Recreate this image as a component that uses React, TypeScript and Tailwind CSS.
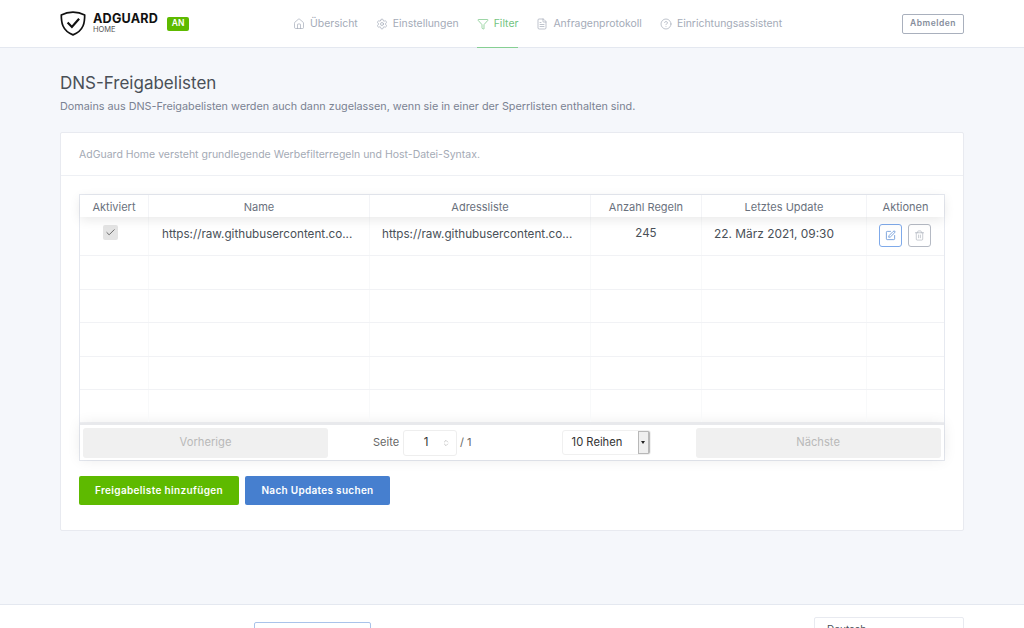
import { CircleHelp, FileText, Filter, House, Settings, SquarePen, Trash2, Check, ChevronsUpDown } from "lucide-react"

const navItems = [
  { label: "Übersicht", icon: House },
  { label: "Einstellungen", icon: Settings },
  { label: "Filter", icon: Filter, active: true },
  { label: "Anfragenprotokoll", icon: FileText },
  { label: "Einrichtungsassistent", icon: CircleHelp },
]

const columns = ["Aktiviert", "Name", "Adressliste", "Anzahl Regeln", "Letztes Update", "Aktionen"]
const gridCols = "grid grid-cols-[69px_221px_221px_111px_165px_1fr]"
const url = "https://raw.githubusercontent.co..."
const emptyRows = [34, 33, 34, 33, 33]

function Logo() {
  return (
    <svg viewBox="0 0 26 25" className="h-[25px] w-[26px]" fill="none">
      <path
        d="M13 1.2C9 1.2 4.6 2.2 1.3 3.9c0 6.8.4 15.4 11.7 20 11.3-4.6 11.7-13.2 11.7-20C21.4 2.2 17 1.2 13 1.2z"
        stroke="#111"
        strokeWidth="1.7"
        strokeLinejoin="round"
      />
      <path d="M7.6 11.6l4.3 4.4 7.2-8.2" stroke="#111" strokeWidth="2.2" />
    </svg>
  )
}

function Header() {
  return (
    <header className="flex h-[48px] shrink-0 items-center border-b border-[#e4e8f0] bg-white px-[60px]">
      <div className="flex w-[233px] items-center">
        <Logo />
        <div className="ml-[7px] mt-[1px] flex flex-col text-[#111]">
          <span className="text-[12.6px] font-bold leading-[12px] tracking-[0.2px]">ADGUARD</span>
          <span className="text-[7.5px] leading-[10px] text-[#555]">HOME</span>
        </div>
        <span className="ml-[9px] flex h-[14px] w-[22px] items-center justify-center rounded-[2px] bg-[#5eba00] text-[8.5px] font-semibold text-white">
          AN
        </span>
      </div>
      <nav className="flex h-full gap-[18px]">
        {navItems.map((item) => {
          const Icon = item.icon
          return (
            <div
              key={item.label}
              className={`relative z-10 flex h-[48px] items-center gap-[5px] border-b text-[10.45px] ${
                item.active ? "border-[#86cf93] text-[#72c47f]" : "border-transparent text-[#a4abb8]"
              }`}
            >
              <Icon size={12} strokeWidth={1.4} />
              <span>{item.label}</span>
            </div>
          )
        })}
      </nav>
      <button className="ml-auto h-[20px] w-[62px] rounded-[2px] border border-[#a9b0bd] text-[8.5px] font-semibold tracking-[0.5px] text-[#868e9c]">
        Abmelden
      </button>
    </header>
  )
}

function FilterTable() {
  return (
    <div className="mx-[18px] mt-[18px] border border-[#e6e9f0] text-[11px] text-[#495057]">
      <div className={`${gridCols} relative h-[22px] shadow-[0_3px_12px_rgba(0,0,0,0.09)]`}>
        {columns.map((col) => (
          <div key={col} className="flex items-center justify-center border-r border-[#f3f4f7] pt-[2px] text-[11px] text-[#6a717d] last:border-r-0">
            {col}
          </div>
        ))}
      </div>
      <div className={`${gridCols} h-[39px] border-b border-[#f1f2f5]`}>
        <div className="flex justify-center border-r border-[#f8f9fa] pr-[7px] pt-[8px]">
          <span className="flex h-[15px] w-[15px] items-center justify-center rounded-[2px] bg-[#e4e4e4]">
            <Check size={11} strokeWidth={1.5} className="text-[#333]" />
          </span>
        </div>
        <div className="border-r border-[#f8f9fa] pl-[13px] pt-[10px]">
          <div className="whitespace-nowrap text-[11.7px] leading-[14px]">{url}</div>
        </div>
        <div className="border-r border-[#f8f9fa] pl-[12px] pt-[10px]">
          <div className="whitespace-nowrap text-[11.7px] leading-[14px]">{url}</div>
        </div>
        <div className="border-r border-[#f8f9fa] pt-[9px] text-center text-[11.5px] leading-[14px]">245</div>
        <div className="border-r border-[#f8f9fa] pr-[20px] pt-[10px] text-center text-[11.9px] leading-[14px]">22. März 2021, 09:30</div>
        <div className="flex justify-center gap-[6px] pr-[2px] pt-[7px]">
          <span className="flex h-[23px] w-[23px] items-center justify-center rounded-[3px] border border-[#7faaea]">
            <SquarePen size={11} strokeWidth={1.5} className="text-[#467fcf]" />
          </span>
          <span className="flex h-[23px] w-[23px] items-center justify-center rounded-[3px] border border-[#b5bac4]">
            <Trash2 size={11} strokeWidth={1.3} className="text-[#a4aab5]" />
          </span>
        </div>
      </div>
      {emptyRows.map((height, i) => (
        <div key={i} className={`${gridCols} border-b border-[#f1f2f5] last:border-b-0`} style={{ height }}>
          {columns.map((col) => (
            <div key={col} className="border-r border-[#f8f9fa] last:border-r-0" />
          ))}
        </div>
      ))}
      <div className="flex h-[37px] items-center border-t-2 border-[#e8e9ec] px-[3px] shadow-[0_0_14px_rgba(0,0,0,0.08)]">
        <div className="flex h-[30px] w-[245px] items-center justify-center rounded-[3px] bg-[#f0f0f0] text-[11.2px] text-[#b9b9b9]">
          Vorherige
        </div>
        <div className="ml-[45px] flex items-center text-[11px] text-[#666]">
          <span>Seite</span>
          <div className="relative ml-[4px] flex h-[26px] w-[54px] items-center justify-center rounded-[3px] border border-[#eeeeee] pr-[8px] text-[11.5px] text-[#333]">
            1
            <ChevronsUpDown size={8} strokeWidth={1.5} className="absolute right-[6px] text-[#999]" />
          </div>
          <span className="ml-[3px]">/ 1</span>
        </div>
        <div className="ml-[90px] flex h-[25px] w-[89px] items-center justify-between rounded-[3px] border border-[#f0f0f0] pl-[9px] text-[11.2px] text-[#333]">
          <span>10 Reihen</span>
          <span className="flex h-full w-[12px] items-center justify-center rounded-r-[2px] border-y border-l border-r-2 border-[#b8b8b8] bg-[#efefef]">
            <span className="border-x-[2.5px] border-t-[3px] border-x-transparent border-t-[#222]" />
          </span>
        </div>
        <div className="ml-[45px] flex h-[30px] w-[245px] items-center justify-center rounded-[3px] bg-[#f0f0f0] text-[11.2px] text-[#b9b9b9]">
          Nächste
        </div>
      </div>
    </div>
  )
}

export default function App() {
  return (
    <div className="flex h-[628px] flex-col overflow-hidden bg-[#f5f7fb] font-['Inter',sans-serif]">
      <Header />
      <main className="flex-1 px-[60px]">
        <h1 className="mt-[24px] text-[17px] font-normal leading-[22px] text-[#495057]">DNS-Freigabelisten</h1>
        <p className="mt-[6px] text-[10.8px] leading-[13px] text-[#7a8292]">
          Domains aus DNS-Freigabelisten werden auch dann zugelassen, wenn sie in einer der Sperrlisten enthalten sind.
        </p>
        <section className="mt-[19px] h-[399px] rounded-[2px] border border-[#e8eaf0] bg-white">
          <div className="flex h-[43px] items-center border-b border-[#eef0f4] pl-[18px] pt-[1px] text-[10.5px] text-[#a4aab5]">
            AdGuard Home versteht grundlegende Werbefilterregeln und Host-Datei-Syntax.
          </div>
          <FilterTable />
          <div className="ml-[18px] mt-[15px] flex gap-[6px]">
            <button className="h-[29px] w-[160px] rounded-[2px] bg-[#5eba00] text-[10px] font-semibold tracking-[0.35px] text-white">
              Freigabeliste hinzufügen
            </button>
            <button className="h-[29px] w-[145px] rounded-[2px] bg-[#467fcf] text-[10px] font-semibold tracking-[0.3px] text-white">
              Nach Updates suchen
            </button>
          </div>
        </section>
      </main>
      <footer className="relative flex h-[24px] shrink-0 border-t border-[#e4e8f0] bg-white pl-[254px] pr-[60px]">
        <div className="mt-[17px] h-[30px] w-[117px] rounded-t-[2px] border border-[#a9c3ea]" />
        <div className="ml-auto mt-[12px] h-[30px] w-[150px] rounded-t-[2px] border border-[#e8eaf0] pl-[12px] pt-[4px] text-[10px] text-[#495057]">
          Deutsch
        </div>
      </footer>
    </div>
  )
}
